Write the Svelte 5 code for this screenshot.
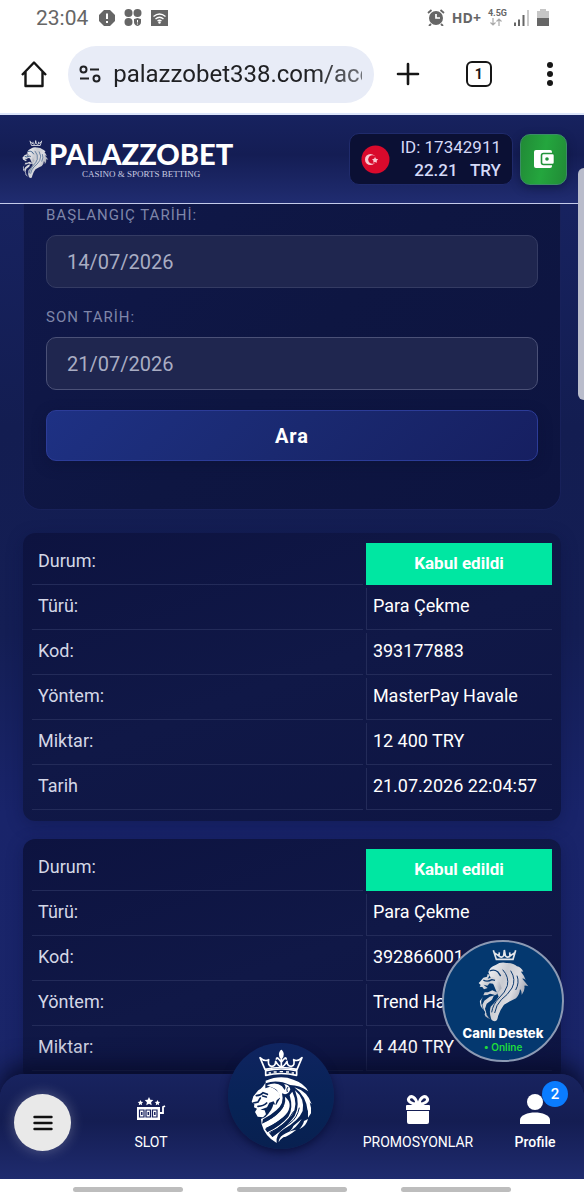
<script>
	let startDate = $state('14/07/2026');
	let endDate = $state('21/07/2026');
	let address = $state('palazzobet338.com/acc');

	const transactions = [
		{
			status: 'Kabul edildi',
			rows: [
				['Türü:', 'Para Çekme'],
				['Kod:', '393177883'],
				['Yöntem:', 'MasterPay Havale'],
				['Miktar:', '12 400 TRY'],
				['Tarih', '21.07.2026 22:04:57']
			]
		},
		{
			status: 'Kabul edildi',
			rows: [
				['Türü:', 'Para Çekme'],
				['Kod:', '392866001'],
				['Yöntem:', 'Trend Havale'],
				['Miktar:', '4 440 TRY']
			]
		}
	];
</script>

{#snippet silverLion()}
	<svg class="silver-lion" viewBox="20 20 156 234" aria-hidden="true">
		<defs>
			<linearGradient id="silver" x1="0" y1="0" x2="1" y2="0.6">
				<stop offset="0" stop-color="#f6f6f8" />
				<stop offset="0.4" stop-color="#c9cbd1" />
				<stop offset="0.65" stop-color="#dcdce1" />
				<stop offset="1" stop-color="#8d93a3" />
			</linearGradient>
		</defs>
		<g fill="none" stroke="#e3e5ea" stroke-width="5">
			<path d="M69 30 78 57H128L136 30M70 36 86 47 87 36M135 36 119 47 118 36M86 47Q95 54 100 46L102 29 105 46Q111 54 119 47" />
		</g>
		<g fill="url(#silver)">
			<path d="M54 96Q58 80 76 74 91 64 108 68 129 67 140 78 152 80 159 94 154 93 152 94 162 106 166 119 160 114 156 115 168 129 174 138 165 134 162 136 165 151 154 164 155 152 149 146 148 163 137 174 119 182 101 193 89 208 83 228 81 250 64 239 55 218 61 199 76 184 85 169 90 155 Q93 142 84 132 L75 124Q80 111 69 106L52 110Z" />
			<path d="M52 101 50 109 39 112 29 124 25 128 31 134 28 139 36 140 41 147 52 143 44 137 40 133 51 136 58 129 68 130 80 138 86 148 79 156 66 150 53 156 43 156 39 165 51 164 59 160 72 163 65 178 49 190 44 205 49 222 40 208 36 193 42 181 58 169 78 163 94 144 88 126 79 115 68 110 52 115 59 104Z" />
			<path d="M38 170Q31 180 33 190 38 202 37 207 27 194 29 181ZM45 213Q49 229 61 236 48 235 43 223Z" />
		</g>
		<g fill="none" stroke="#0d3a70">
			<path d="M39 119Q50 126 65 118L74 120M58 92Q71 86 82 94L91 107" stroke-width="4" />
			<path d="M97 88Q117 110 111 136 105 156 86 173 68 191 64 216M121 91Q138 118 125 143 112 164 93 178 77 194 73 218M140 106Q148 127 136 149" stroke-width="3" />
		</g>
	</svg>
{/snippet}

<div class="screen">
	<div class="status">
		<span class="time">23:04</span>
		<svg width="16" height="16" viewBox="0 0 16 16">
			<path d="M5 0h6l5 5v6l-5 5H5l-5-5V5Z" fill="#666" />
			<path d="M8 3.5v5.500M8 11v2" stroke="#fff" stroke-width="2" />
		</svg>
		<svg width="18" height="17" viewBox="0 0 18 17" fill="#666">
			<circle cx="4.500" cy="4" r="4" /><circle cx="13.500" cy="4" r="4" /><circle cx="4.500" cy="13" r="4" />
			<path d="M10 10c2 0 2-1 3.500-1S15 10 17 10v3q0 3-3.500 4Q10 16 10 13Z" />
			<path d="M13.500 11v2.500M13.500 14.500v1" stroke="#fff" />
		</svg>
		<svg width="17" height="16" viewBox="0 0 17 16">
			<path d="M0 0h17v16H0Z" fill="#666" />
			<path d="M2.500 6.500q6-5 12 0M4.500 9q4-3.500 8 0M6.500 11q2-1.500 4 0" fill="none" stroke="#fff" stroke-width="1.300" />
			<circle cx="8.500" cy="12.500" r="1.200" fill="#fff" />
		</svg>
		<span class="push"></span>
		<svg width="18" height="17" viewBox="0 0 18 17">
			<circle cx="9" cy="9" r="7" fill="#666" />
			<path d="M1 4 4.500 1M17 4l-3.500-3M4 15l-2 2M14 15l2 2" stroke="#666" stroke-width="1.800" />
			<path d="M9 5v4h4" fill="none" stroke="#fff" stroke-width="1.700" />
		</svg>
		<b class="hd">HD+</b>
		<span class="net">
			<b>4.5G</b>
			<svg width="12" height="8" viewBox="0 0 12 8" fill="none" stroke="#aaa" stroke-width="1.200">
				<path d="M3 0v7M0.500 4.500 3 7l2.500-2.500M9 8V1M6.500 3.500 9 1l2.500 2.500" />
			</svg>
		</span>
		<svg width="16" height="16" viewBox="0 0 16 16">
			<path d="M1 12.500V16M5 9.500V16M9.500 5V16" stroke="#666" stroke-width="2" />
			<path d="M14 0v16" stroke="#bbb" stroke-width="1.500" />
		</svg>
		<svg width="12" height="17" viewBox="0 0 12 17">
			<path d="M3 0h6v2h3v7H0V2h3Z" fill="#c6c6c6" />
			<path d="M0 9h12v8H0Z" fill="#666" />
		</svg>
	</div>

	<div class="toolbar">
		<button class="tool" aria-label="Home">
			<svg width="28" height="28" viewBox="0 0 28 28" fill="none" stroke="#161616" stroke-width="2.400" stroke-linejoin="round">
				<path d="M2 15 14 2.500 26 15M5.500 12v14h17V12" />
			</svg>
		</button>
		<div class="omnibox">
			<svg width="22" height="18" viewBox="0 0 22 18" fill="none" stroke="#202124" stroke-width="2">
				<circle cx="4.500" cy="4.500" r="3" /><path d="M11 4.500h9M1 13.500h9" /><circle cx="17.500" cy="13.500" r="3" />
			</svg>
			<input class="address" aria-label="Address" bind:value={address} />
		</div>
		<button class="tool" aria-label="New tab">
			<svg width="24" height="24" viewBox="0 0 24 24" stroke="#161616" stroke-width="2.600" stroke-linecap="round">
				<path d="M12 2v20M2 12h20" />
			</svg>
		</button>
		<button class="tool tabs">1</button>
		<button class="tool" aria-label="Menu">
			<svg width="8" height="26" viewBox="0 0 8 26" fill="#161616">
				<circle cx="4" cy="4" r="3" /><circle cx="4" cy="13" r="3" /><circle cx="4" cy="22" r="3" />
			</svg>
		</button>
	</div>

	<header>
		<a class="logo" href="/">
			{@render silverLion()}
			<span class="words">
				<span class="name">PALAZZOBET</span>
				<span class="tagline">CASINO &amp; SPORTS BETTING</span>
			</span>
		</a>
		<div class="account">
			<svg width="29" height="29" viewBox="0 0 29 29">
				<circle cx="14.500" cy="14.500" r="14" fill="#d90a2c" />
				<circle cx="9.500" cy="14.500" r="5.500" fill="#f7c9d2" />
				<circle cx="11.500" cy="14.500" r="4.300" fill="#d90a2c" />
				<path d="m14 12 1 1.800 2.200.5-1.500 1.500.2 2-1.900-.9-1.800.9.300-2-1.500-1.500 2.100-.5Z" fill="#f7c9d2" />
			</svg>
			<div class="balance">
				<span>ID: 17342911</span>
				<strong>22.21 &nbsp; TRY</strong>
			</div>
		</div>
		<button class="wallet" aria-label="Wallet">
			<svg width="22" height="20" viewBox="0 0 22 20">
				<rect x="1" y="1" width="18" height="18" rx="2" fill="#fff" />
				<rect x="8.500" y="4.500" width="13" height="11" rx="2" fill="#fff" stroke="#219339" stroke-width="1.600" />
				<circle cx="14" cy="10" r="1.800" fill="#219339" />
			</svg>
		</button>
	</header>

	<main>
		<form class="filter" onsubmit={(e) => e.preventDefault()}>
			<label for="start">BAŞLANGIÇ TARİHİ:</label>
			<input id="start" type="text" bind:value={startDate} />
			<label for="end">SON TARİH:</label>
			<input id="end" class="active" type="text" bind:value={endDate} />
			<button type="submit">Ara</button>
		</form>

		{#each transactions as item}
			<section class="card">
				<table>
					<tbody>
						<tr>
							<th>Durum:</th>
							<td class="state">{item.status}</td>
						</tr>
						{#each item.rows as [label, value]}
							<tr>
								<th>{label}</th>
								<td>{value}</td>
							</tr>
						{/each}
					</tbody>
				</table>
			</section>
		{/each}
	</main>

	<nav>
		<button class="menu" aria-label="Menu">
			<svg width="20" height="16" viewBox="0 0 20 16" stroke="#111" stroke-width="2.400" stroke-linecap="round">
				<path d="M1.500 2h17M1.500 8h17M1.500 14h17" />
			</svg>
		</button>
		<a class="item" href="#slot">
			<svg width="30" height="30" viewBox="0 0 30 30">
				<g fill="#fff">
					<path d="m13 3 1.300 2.700 3 .4-2.200 2.100.6 3-2.700-1.400-2.700 1.400.6-3-2.200-2.100 3-.4ZM4.500 6l.8 1.700 1.900.3-1.400 1.300.3 1.900-1.600-.9-1.700.9.300-1.900L1.700 8l1.900-.3ZM21.500 6l.8 1.700 1.900.3-1.400 1.300.3 1.900-1.600-.9-1.700.9.300-1.900L18.700 8l1.900-.3Z" />
					<path d="M1 13h23v13H1Z" />
				</g>
				<path d="M24 19h3v-6l2-1" fill="none" stroke="#fff" stroke-width="1.800" />
				<path d="M3.500 16h4.500v7H3.500ZM10 16h4.500v7H10ZM16.500 16H21v7h-4.500Z" fill="none" stroke="#17215d" stroke-width="1.200" />
				<path d="M5.800 18v3M12.300 18v3M18.800 18v3" stroke="#17215d" stroke-width="1.500" />
			</svg>
			<span>SLOT</span>
		</a>
		<a class="home" href="#home" aria-label="Palazzobet">
			<svg width="70" height="104" viewBox="0 0 210 312">
				<!-- crown -->
				<g fill="none" stroke="#fff" stroke-width="5" stroke-linejoin="round">
					<path d="M57 76 42 41Q56 54 68 47 64 65 77 67 89 67 89 52 98 68 106 69 114 68 123 52 123 67 136 67 148 65 143 47 155 54 168 41L153 76Q105 65 57 76ZM106 20Q96 31 106 43 116 31 106 20V67M91 47Q91 36 100 47L106 55 112 47Q121 36 121 47" />
					<path d="M59 80Q106 70 152 80V94Q106 83 59 94Z" />
					<path d="M68 87h7M83 84h9M101 83h10M120 84h9M137 87h7" stroke-width="4" />
				</g>
				<!-- face -->
				<path d="M58 116Q50 132 37 139L22 157 17 174 25 181 24 190 33 194 27 204 35 218 51 220 60 211 56 199 43 197 63 190 70 176 83 172 88 183 92 169 103 160 98 145 85 134 72 128 58 133Z" fill="#fff" />
				<g fill="none" stroke="#082458" stroke-width="5" stroke-linecap="round">
					<path d="M31 155Q45 154 51 146L64 151M50 156 61 159M22 177 36 174 43 162M36 187Q53 186 62 177" />
				</g>
				<!-- mane -->
				<g fill="#fff">
					<path d="M59 110Q104 91 142 107 174 117 187 142 160 123 132 123 93 105 59 118Z" />
					<path d="M62 124Q91 112 108 127L116 138Q122 129 114 121 129 121 133 136 129 149 117 151L108 148Q116 179 91 199 72 216 51 226L48 239Q82 225 103 202 121 181 117 158 144 180 119 213 99 232 57 255L64 265Q105 245 127 218 143 195 131 153L139 143Q158 181 138 213 114 242 70 268L79 279Q124 249 146 216 164 185 147 139 177 164 170 201 158 230 115 254 88 270 92 297 56 277 47 241L45 225 58 219Q79 199 82 181L91 182 102 163Q99 137 82 132Z" />
					<path d="M145 130Q185 142 197 181L186 171Q188 188 185 201 181 156 145 130ZM175 151Q199 177 195 208L186 221Q188 184 175 151ZM186 225Q181 246 160 256 172 242 174 231ZM167 225Q151 252 129 263 141 252 142 246ZM151 257Q125 278 112 280 103 286 98 295 97 269 151 257Z" />
				</g>
				<g fill="none" stroke="#082458" stroke-width="3">
					<path d="M51 235Q88 221 112 187M60 253Q103 235 124 208M70 266Q120 245 143 202M79 278Q105 253 132 237 153 223 160 191M126 129Q120 134 124 144" />
				</g>
			</svg>
		</a>
		<a class="item" href="#promosyonlar">
			<svg width="30" height="30" viewBox="0 0 30 30">
				<g fill="none" stroke="#fff" stroke-width="3">
					<path d="M14 10C8 10 4 7 6 4S13 3 14 10ZM16 10C22 10 26 7 24 4S17 3 16 10Z" />
				</g>
				<path d="M4 11h22q1 0 1 1v4H3v-4q0-1 1-1ZM4 17h22v11q0 2-2 2H6q-2 0-2-2Z" fill="#fff" />
			</svg>
			<span>PROMOSYONLAR</span>
		</a>
		<a class="item profile" href="#profile">
			<svg width="30" height="30" viewBox="0 0 30 30" fill="#fff">
				<circle cx="15" cy="8" r="8" />
				<path d="M0 30v-4C0 21 8 18.500 15 18.500S30 21 30 26v4Z" />
			</svg>
			<span>Profile</span>
			<em>2</em>
		</a>
	</nav>

	<div class="gestures"><i></i><i></i><i></i></div>

	<button class="support">
		{@render silverLion()}
		<strong>Canlı Destek</strong>
		<span>• Online</span>
	</button>
	<div class="scroller"></div>
</div>

<style>
	:global(body) {
		background: #fff;
	}

	.screen {
		position: relative;
		display: flex;
		flex-direction: column;
		height: 100vh;
		overflow: hidden;
		background: #fff;
		font-family: Roboto, 'Noto Sans', sans-serif;
		font-size: 18px;
		color: #fff;
	}

	button {
		font-family: inherit;
		border: 0;
		padding: 0;
		cursor: pointer;
	}

	a {
		color: inherit;
		text-decoration: none;
	}

	svg {
		flex: none;
		display: block;
	}

	/* phone bars */
	.status {
		display: flex;
		align-items: center;
		gap: 9px;
		height: 35px;
		flex: none;
		padding: 0 35px 0 36px;
		color: #666;
	}

	.time {
		font-size: 21px;
		margin-right: 2px;
	}

	.push {
		flex: 1;
	}

	.hd {
		font-family: 'Open Sans', sans-serif;
		font-size: 14px;
		margin: 0 -2px;
	}

	.net {
		display: flex;
		flex-direction: column;
		align-items: center;
		font-size: 9px;
		line-height: 9px;
	}

	.status svg:nth-last-child(-n + 2) {
		margin-left: -2px;
	}

	.toolbar {
		display: flex;
		align-items: center;
		height: 78px;
		flex: none;
		border-bottom: 2px solid #dce5fa;
	}

	.tool {
		display: flex;
		justify-content: center;
		align-items: center;
		flex: 1;
		background: none;
	}

	.omnibox {
		display: flex;
		align-items: center;
		gap: 12px;
		flex: none;
		box-sizing: border-box;
		width: 52.300%;
		height: 57px;
		padding: 0 12px 0 11px;
		border-radius: 29px;
		background: #e8ecf7;
	}

	.address {
		flex: 1;
		min-width: 0;
		border: 0;
		padding: 0;
		outline: 0;
		background: none;
		color: #202124;
		font-family: inherit;
		font-size: 24px;
		-webkit-mask-image: linear-gradient(90deg, #000 80%, #0009);
		mask-image: linear-gradient(90deg, #000 80%, #0009);
	}

	.tabs {
		font-size: 14px;
		font-weight: 700;
		flex: none;
		width: 26px;
		height: 26px;
		box-sizing: border-box;
		margin: 0 24px;
		border: 2px solid #161616;
		border-radius: 6px;
		color: #161616;
	}

	/* site header */
	header {
		display: flex;
		align-items: center;
		flex: none;
		height: 89px;
		box-sizing: border-box;
		padding: 0 17px 0 21px;
		border-bottom: 1px solid #c4cbea;
		background: linear-gradient(#17225f, #141d54 45%, #202c70);
	}

	.logo {
		display: flex;
		align-items: center;
		margin-right: auto;
	}

	.logo .silver-lion {
		width: 28px;
		height: 41px;
	}

	.words {
		display: flex;
		flex-direction: column;
		align-items: center;
	}

	.name {
		font-family: Lato, sans-serif;
		font-size: 29px;
		line-height: 30px;
		font-weight: 900;
	}

	.tagline {
		font-family: 'Liberation Serif', serif;
		font-size: 9px;
		line-height: 10px;
		color: #c9cbe0;
	}

	.account {
		display: flex;
		align-items: center;
		justify-content: space-between;
		box-sizing: border-box;
		width: 164px;
		height: 52px;
		padding: 0 11px;
		margin-right: 7px;
		border: 1px solid #202b6c;
		border-radius: 10px;
		background: #0b1034;
		color: #d5daf8;
		font-size: 17px;
		line-height: 23px;
	}

	.balance {
		display: flex;
		flex-direction: column;
		align-items: flex-end;
	}

	.balance strong {
		font-weight: 500;
	}

	.wallet {
		display: flex;
		align-items: center;
		justify-content: center;
		width: 47px;
		height: 51px;
		border: 1px solid #3a8d66;
		border-radius: 10px;
		background: linear-gradient(100deg, #218a36, #24a63e 50%, #218a36);
		box-shadow: 0 3px 8px #0b103488;
	}

	/* page */
	main {
		flex: 1;
		min-height: 0;
		overflow: hidden;
		padding: 0 23px;
		background: linear-gradient(#17225f, #131d51 25%, #141e54 48%, #19246a 68%, #1a2568);
	}

	.filter {
		display: flex;
		flex-direction: column;
		padding: 0 22px 48px;
		border: 1px solid #18215a;
		border-top: 0;
		border-radius: 0 0 18px 18px;
		background: linear-gradient(135deg, #10184a, #0e1642 50%, #0d1440);
	}

	.filter label {
		margin-bottom: 9px;
		font-size: 15px;
		line-height: 22px;
		letter-spacing: 1px;
		color: #7f86a9;
	}

	.filter input {
		box-sizing: border-box;
		height: 53px;
		margin-bottom: 18px;
		padding: 0 20px;
		border: 1px solid #343b63;
		border-radius: 10px;
		outline: 0;
		background: #1f264f;
		color: #a9adc3;
		font-family: inherit;
		font-size: 20px;
	}

	.filter input.active {
		margin-bottom: 20px;
		border-color: #4b5177;
	}

	.filter button {
		height: 51px;
		border: 1px solid #2c3c98;
		border-radius: 10px;
		background: linear-gradient(135deg, #1e3184, #1a2970 50%, #161f61);
		box-shadow: 0 4px 14px #090f3366;
		color: #fff;
		font-size: 20px;
		font-weight: 700;
		letter-spacing: 1px;
	}

	.card {
		margin-top: 23px;
		padding: 7px 6px 8px;
		border-radius: 12px;
		background: linear-gradient(160deg, #0d1340, #101847 50%, #0e1543);
		box-shadow: 0 4px 16px #0b114066;
	}

	.card + .card {
		margin-top: 18px;
	}

	table {
		width: 100%;
		table-layout: fixed;
		border-collapse: separate;
		border-spacing: 3px;
	}

	th,
	td {
		box-sizing: border-box;
		height: 42px;
		padding: 0 6px 6px;
		border-bottom: 1px solid #232b59;
		font-weight: 400;
		line-height: 24px;
		text-align: left;
		white-space: nowrap;
	}

	th {
		color: #d4d7e6;
	}

	td {
		width: 36%;
		border-left: 1px solid #232b59;
	}

	.state {
		padding: 0 0 2px;
		border: 0;
		background: #00e7a2;
		font-size: 17px;
		font-weight: 700;
		text-align: center;
	}

	/* bottom navigation */
	nav {
		position: relative;
		display: grid;
		grid-template-columns: 84fr 134fr 126fr 148fr 86fr;
		flex: none;
		height: 105px;
		box-sizing: border-box;
		margin-top: -24px;
		padding-right: 6px;
		border-radius: 24px 24px 0 0;
		background: linear-gradient(#18235f, #141d52 45%, #1f2b6e);
		box-shadow: 0 -8px 24px #070b2a;
	}

	.menu {
		display: flex;
		align-items: center;
		justify-content: center;
		width: 57px;
		height: 57px;
		margin: 20px 0 0 14px;
		border-radius: 50%;
		background: #e9e9e9;
		box-shadow: 0 0 14px #ffffff44;
	}

	.item {
		position: relative;
		display: flex;
		flex-direction: column;
		align-items: center;
		gap: 9px;
		padding-top: 20px;
		font-size: 14px;
		line-height: 18px;
	}

	.profile {
		font-weight: 500;
	}

	.profile em {
		position: absolute;
		top: 7px;
		right: 10px;
		width: 26px;
		border-radius: 50%;
		background: #0a7cff;
		font-size: 15px;
		line-height: 26px;
		font-style: normal;
		text-align: center;
	}

	.home {
		display: flex;
		align-items: center;
		justify-content: center;
		justify-self: center;
		width: 106px;
		height: 106px;
		margin-top: -31px;
		border-radius: 50%;
		background: linear-gradient(#0f2460, #072356 60%, #082050);
		box-shadow: 0 3px 8px #0a113d;
	}

	.gestures {
		position: relative;
		display: flex;
		justify-content: center;
		gap: 54px;
		flex: none;
		height: 13px;
		padding-top: 8px;
		background: #fff;
	}

	.gestures i {
		width: 110px;
		height: 5px;
		border-radius: 3px;
		background: #bdbdbd;
	}

	.support {
		position: absolute;
		right: 20px;
		bottom: 138px;
		display: flex;
		flex-direction: column;
		align-items: center;
		width: 122px;
		height: 122px;
		box-sizing: border-box;
		padding-top: 5px;
		border: 2px solid #8c9ab4;
		border-radius: 50%;
		background: #04386f;
		color: #fff;
	}

	.support .silver-lion {
		width: 52px;
		height: 78px;
	}

	.support strong {
		font-family: Inter, sans-serif;
		font-size: 13px;
		line-height: 16px;
		font-weight: 800;
	}

	.support span {
		font-family: Inter, sans-serif;
		font-size: 10px;
		line-height: 12px;
		font-weight: 600;
		color: #1fdc3c;
	}

	.scroller {
		position: absolute;
		top: 168px;
		right: 0;
		width: 6px;
		height: 232px;
		border-radius: 6px 0 0 6px;
		background: #b9bccb;
	}
</style>
